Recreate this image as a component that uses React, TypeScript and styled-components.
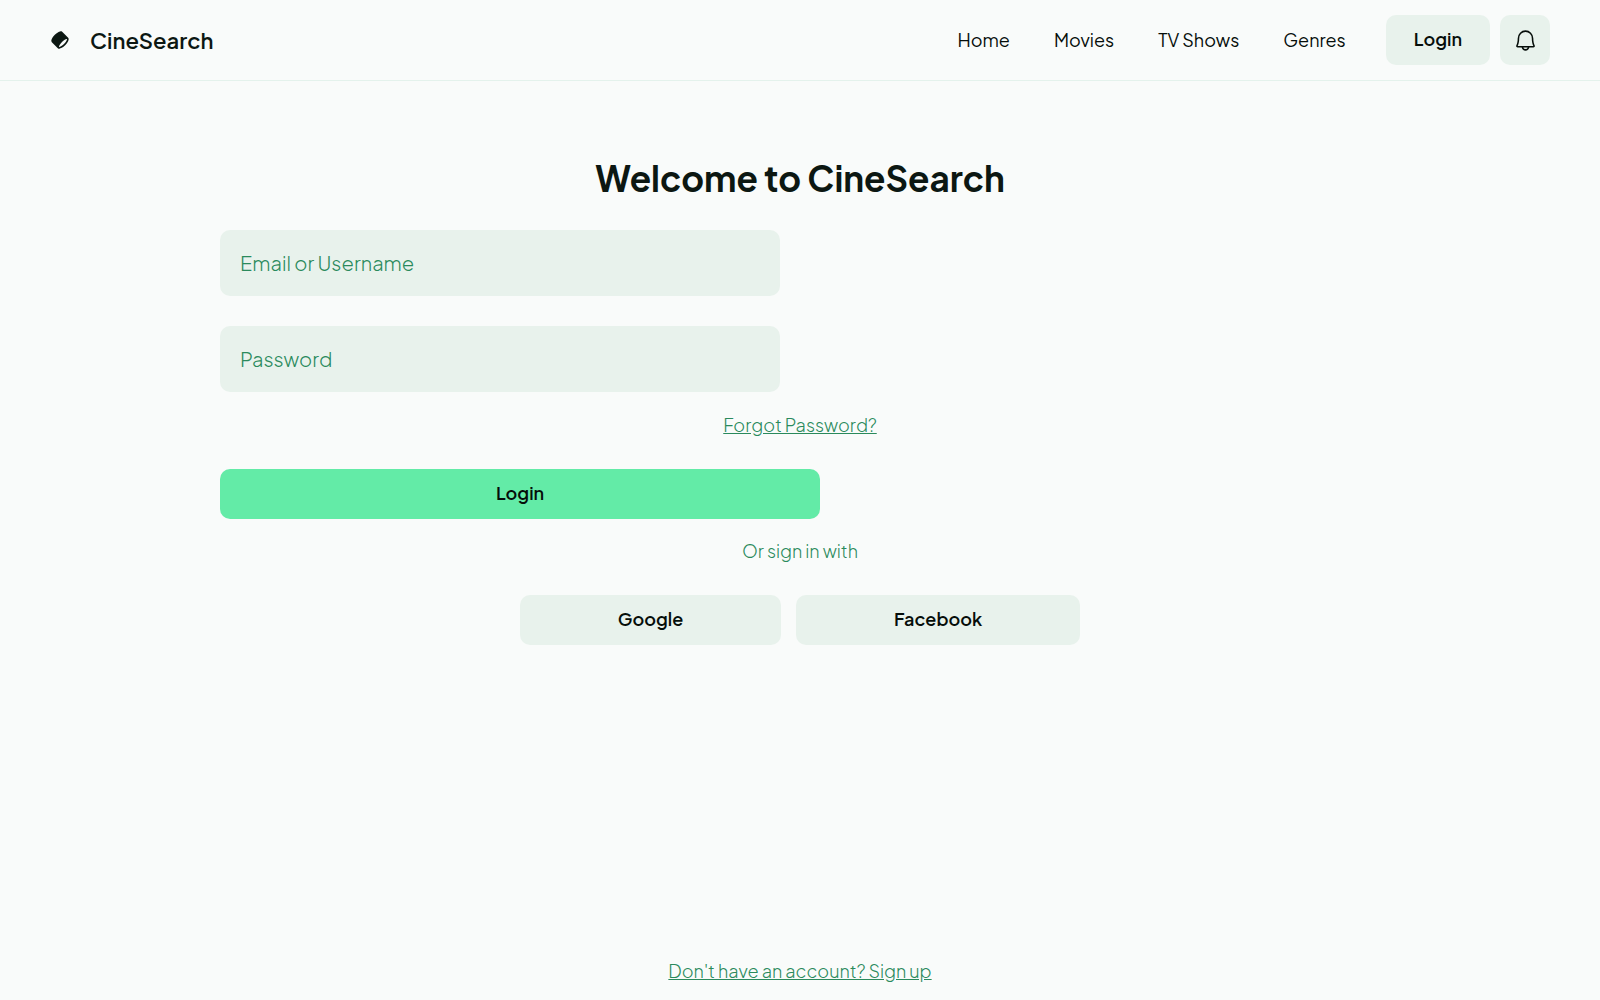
import React from "react";
import styled, { createGlobalStyle, css } from "styled-components";
import { PiBell } from "react-icons/pi";

const color = {
  page: "#f9fbfa",
  field: "#e8f2ec",
  ink: "#0c1712",
  black: "#060e0a",
  green: "#2a8a5c",
  primary: "#63eba7",
};

const GlobalStyle = createGlobalStyle`
  *, *::before, *::after { box-sizing: border-box; }
  body {
    margin: 0;
    background: ${color.page};
    color: ${color.ink};
    font-family: "Plus Jakarta Sans", Inter, "Noto Sans", sans-serif;
  }
  button, input { font: inherit; }
`;

const Page = styled.div`
  min-height: 100vh;
  display: flex;
  flex-direction: column;
`;

const Header = styled.header`
  display: flex;
  align-items: center;
  justify-content: space-between;
  padding: 15px 50px;
  border-bottom: 1px solid #e4f2ec;
`;

const Brand = styled.div`
  display: flex;
  align-items: center;
  gap: 20px;
  font-size: 22px;
  line-height: 28px;
  font-weight: 600;
`;

const Actions = styled.div`
  display: flex;
  align-items: center;
  gap: 40px;
`;

const Nav = styled.nav`
  display: flex;
  gap: 44px;
`;

const NavLink = styled.a`
  color: ${color.black};
  font-size: 18px;
  line-height: 24px;
  text-decoration: none;
`;

const HeaderButtons = styled.div`
  display: flex;
  gap: 10px;
`;

const Button = styled.button<{ $primary?: boolean; $wide?: boolean }>`
  display: flex;
  align-items: center;
  justify-content: center;
  height: 50px;
  padding: 0 28px 2px;
  border: 0;
  border-radius: 10px;
  background: ${(p) => (p.$primary ? color.primary : color.field)};
  color: ${color.black};
  font-size: 18px;
  line-height: 24px;
  font-weight: 600;
  cursor: pointer;
  ${(p) => p.$wide && css`flex: 1 1 auto;`}
`;

const IconButton = styled(Button)`
  width: 50px;
  padding: 0;
`;

const Main = styled.main`
  flex: 1;
  width: 100%;
  max-width: 1200px;
  margin: 0 auto;
  padding: 75px 20px 0;
  display: flex;
  flex-direction: column;
`;

const Title = styled.h1`
  margin: 0 0 30px;
  font-size: 35px;
  line-height: 44px;
  font-weight: 700;
  text-align: center;
`;

const Form = styled.form`
  display: flex;
  flex-direction: column;
`;

const Field = styled.label`
  display: block;
  max-width: 560px;
  margin-bottom: 30px;

  &:nth-of-type(2) { margin-bottom: 21px; }
`;

const Input = styled.input`
  display: block;
  width: 100%;
  height: 66px;
  padding: 0 20px 2px;
  border: 0;
  border-radius: 10px;
  outline: none;
  background: ${color.field};
  color: ${color.ink};
  font-size: 20px;
  font-weight: 300;

  &::placeholder { color: ${color.green}; opacity: 1; }
`;

const TextLink = styled.a`
  align-self: center;
  color: ${color.green};
  font-size: 18px;
  line-height: 24px;
  font-weight: 300;
  text-decoration: underline;
`;

const SubmitRow = styled.div`
  display: flex;
  max-width: 600px;
  margin-top: 32px;
`;

const Divider = styled.p`
  margin: 20px 0 32px;
  color: ${color.green};
  font-size: 18px;
  line-height: 24px;
  font-weight: 300;
  text-align: center;
`;

const Social = styled.div`
  display: flex;
  gap: 15px;
  align-self: center;
  width: 100%;
  max-width: 560px;
`;

const Footer = styled.footer`
  display: flex;
  justify-content: center;
  padding: 17px;
`;

const links = ["Home", "Movies", "TV Shows", "Genres"];

function Logo() {
  return (
    <svg width="20" height="20" viewBox="0 0 48 48" fill="none" aria-hidden="true">
      <path
        fillRule="evenodd"
        clipRule="evenodd"
        fill={color.ink}
        d="M39.475 21.6262C40.358 21.4363 40.6863 21.5589 40.7581 21.5934C40.7876 21.655 40.8547 21.857 40.8082 22.3336C40.7408 23.0255 40.4502 24.0046 39.8572 25.2301C38.6799 27.6631 36.5085 30.6631 33.5858 33.5858C30.6631 36.5085 27.6632 38.6799 25.2301 39.8572C24.0046 40.4502 23.0255 40.7407 22.3336 40.8082C21.8571 40.8547 21.6551 40.7875 21.5934 40.7581C21.5589 40.6863 21.4363 40.358 21.6262 39.475C21.8562 38.4054 22.4689 36.9657 23.5038 35.2817C24.7575 33.2417 26.5497 30.9744 28.7621 28.762C30.9744 26.5497 33.2417 24.7574 35.2817 23.5037C36.9657 22.4689 38.4054 21.8562 39.475 21.6262ZM4.41189 29.2403L18.7597 43.5881C19.8813 44.7097 21.4027 44.9179 22.7217 44.7893C24.0585 44.659 25.5148 44.1631 26.9723 43.4579C29.9052 42.0387 33.2618 39.5667 36.4142 36.4142C39.5667 33.2618 42.0387 29.9052 43.4579 26.9723C44.1631 25.5148 44.659 24.0585 44.7893 22.7217C44.9179 21.4027 44.7097 19.8813 43.5881 18.7597L29.2403 4.41187C27.8527 3.02428 25.8765 3.02573 24.2861 3.36776C22.6081 3.72863 20.7334 4.58419 18.8396 5.74801C16.4978 7.18716 13.9881 9.18353 11.5858 11.5858C9.18354 13.988 7.18717 16.4978 5.74802 18.8396C4.58421 20.7334 3.72865 22.6081 3.36778 24.2861C3.02574 25.8765 3.02429 27.8527 4.41189 29.2403Z"
      />
    </svg>
  );
}

export default function App() {
  return (
    <Page>
      <GlobalStyle />
      <Header>
        <Brand>
          <Logo />
          <span>CineSearch</span>
        </Brand>
        <Actions>
          <Nav>
            {links.map((l) => (
              <NavLink key={l} href="#">{l}</NavLink>
            ))}
          </Nav>
          <HeaderButtons>
            <Button type="button">Login</Button>
            <IconButton type="button" aria-label="Notifications">
              <PiBell size={25} />
            </IconButton>
          </HeaderButtons>
        </Actions>
      </Header>
      <Main>
        <Title>Welcome to CineSearch</Title>
        <Form onSubmit={(e) => e.preventDefault()}>
          <Field>
            <Input type="text" placeholder="Email or Username" aria-label="Email or Username" />
          </Field>
          <Field>
            <Input type="password" placeholder="Password" aria-label="Password" />
          </Field>
          <TextLink href="#">Forgot Password?</TextLink>
          <SubmitRow>
            <Button type="submit" $primary $wide>Login</Button>
          </SubmitRow>
        </Form>
        <Divider>Or sign in with</Divider>
        <Social>
          <Button type="button" $wide>Google</Button>
          <Button type="button" $wide>Facebook</Button>
        </Social>
      </Main>
      <Footer>
        <TextLink href="#">Don't have an account? Sign up</TextLink>
      </Footer>
    </Page>
  );
}
